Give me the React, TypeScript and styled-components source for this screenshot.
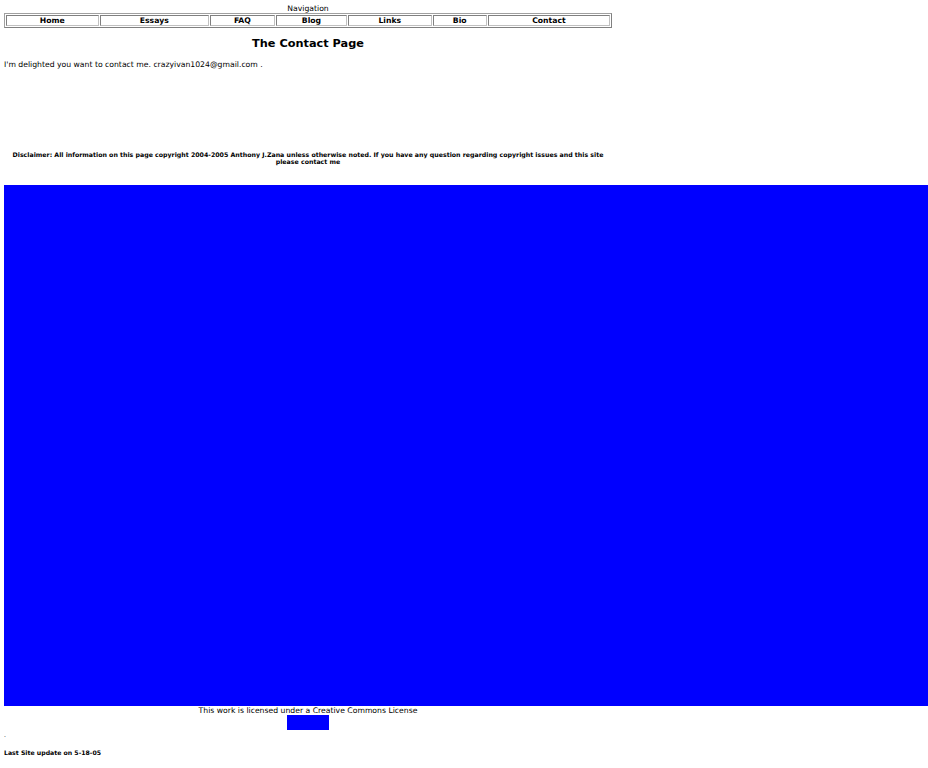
import React from "react";
import styled, { createGlobalStyle } from "styled-components";

const GlobalStyle = createGlobalStyle`
	html {
		overflow: hidden;
	}
	body {
		margin: 4px 0 4px 4px;
		overflow: visible;
		background: #ffffff;
		color: #000000;
		font-family: "DejaVu Sans", Verdana, sans-serif;
		font-size: 7.7px;
	}
`;

const Column = styled.div`
	width: 608px;
`;

const NavTable = styled.table`
	width: 608px;
	border: 1px solid #a0a0a0;
	border-right-color: #808080;
	border-bottom-color: #808080;
	border-spacing: 1px;
	font-size: 7.7px;
	margin-top: 0;
`;

const Caption = styled.caption`
	font-size: 7.7px;
	line-height: 9px;
	padding-bottom: 0px;
	color: #000;
`;

const NavCell = styled.td<{ $w: number }>`
	width: ${(p) => p.$w}px;
	border: 1px solid #c0c0c0;
	border-left-color: #808080;
	border-top-color: #808080;
	padding: 0;
	height: 9px;
	line-height: 9px;
	text-align: center;
	font-weight: bold;
`;

const Heading = styled.h3`
	margin: 9px 0 0;
	text-align: center;
	font-size: 11.3px;
	line-height: 14px;
	font-weight: bold;
`;

const Intro = styled.p`
	margin: 8px 0 0;
	font-size: 7.7px;
	line-height: 12px;
`;

const Disclaimer = styled.p`
	margin: 80px 0 0;
	text-align: center;
	font-size: 6.25px;
	line-height: 7px;
	font-weight: bold;
`;

// stands in for the wide banner image
const Banner = styled.div`
	margin-top: 20px;
	width: 924px;
	height: 521px;
	background: #0000ff;
`;

const License = styled.div`
	text-align: center;
	font-size: 7.7px;
	line-height: 9px;
`;

const Badge = styled.div`
	width: 42px;
	height: 15px;
	margin: 0 auto;
	background: #0000ff;
`;

const Dot = styled.div`
	margin-top: 0;
	font-size: 6px;
	line-height: 9px;
`;

const Updated = styled.p`
	margin: 10px 0 0;
	font-size: 6.2px;
	line-height: 8px;
	font-weight: bold;
`;

const links = [
	{ label: "Home", w: 92 },
	{ label: "Essays", w: 109 },
	{ label: "FAQ", w: 64 },
	{ label: "Blog", w: 70 },
	{ label: "Links", w: 83 },
	{ label: "Bio", w: 53 },
	{ label: "Contact", w: 122 },
];

function App() {
	return (
		<>
			<GlobalStyle />
			<Column>
				<NavTable>
					<Caption>Navigation</Caption>
					<tbody>
						<tr>
							{links.map((l) => (
								<NavCell key={l.label} $w={l.w}>
									{l.label}
								</NavCell>
							))}
						</tr>
					</tbody>
				</NavTable>
				<Heading>The Contact Page</Heading>
				<Intro>I'm delighted you want to contact me. crazyivan1024@gmail.com .</Intro>
				<Disclaimer>
					Disclaimer: All information on this page copyright 2004-2005 Anthony J.Zana unless otherwise
					noted. If you have any question regarding copyright issues and this site please contact me
				</Disclaimer>
			</Column>
			<Banner />
			<Column>
				<License>This work is licensed under a Creative Commons License</License>
				<Badge />
			</Column>
			<Dot>.</Dot>
			<Updated>Last Site update on 5-18-05</Updated>
		</>
	);
}

export default App;
